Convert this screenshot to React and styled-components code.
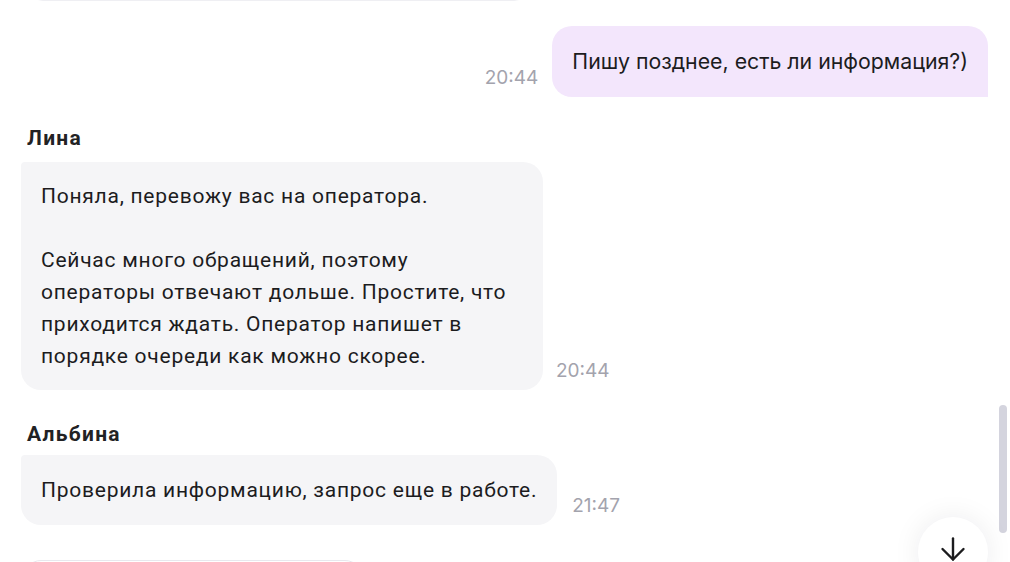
import React from 'react';
import styled, { createGlobalStyle } from 'styled-components';
import { ArrowDown } from 'lucide-react';

const GlobalStyle = createGlobalStyle`
  html, body {
    margin: 0;
    padding: 0;
    background: #fff;
  }
  body {
    font-family: Roboto, "Noto Sans", sans-serif;
    color: #1c1c1e;
  }
`;

const Viewport = styled.div`
  position: relative;
  width: 1010px;
  height: 562px;
  overflow: hidden;
  background: #fff;
`;

const Feed = styled.div`
  display: flex;
  flex-direction: column;
  padding: 0 22px 0 21px;
`;

const PrevCard = styled.div`
  height: 40px;
  margin: -39px 0 0 6px;
  width: 503px;
  box-sizing: border-box;
  border: 1px solid #efeff3;
  border-radius: 16px;
`;

const OutRow = styled.div`
  display: flex;
  justify-content: flex-end;
  align-items: flex-end;
  gap: 14px;
  margin-top: 25px;
`;

const InGroup = styled.div`
  display: flex;
  flex-direction: column;
  margin-top: ${({ $gap }) => $gap}px;
`;

const Name = styled.div`
  font-family: Roboto, sans-serif;
  font-weight: 700;
  font-size: 21px;
  letter-spacing: 1.3px;
  line-height: 24px;
  color: #222224;
  padding-left: 6px;
  margin-bottom: ${({ $gap = 12 }) => $gap}px;
`;

const InRow = styled.div`
  display: flex;
  align-items: flex-end;
  gap: ${({ $gap }) => $gap}px;
`;

const Bubble = styled.div`
  box-sizing: border-box;
  width: ${({ $width }) => ($width ? `${$width}px` : 'auto')};
  padding: ${({ $out, $padY = 18 }) => ($out ? '20px 20px' : `${$padY}px 20px`)};
  background: ${({ $out }) => ($out ? '#f3e6fc' : '#f5f5f7')};
  border-radius: ${({ $out }) => ($out ? '20px 20px 0 20px' : '4px 20px 20px 20px')};
  font-family: ${({ $out }) => ($out ? 'Inter, sans-serif' : 'Roboto, sans-serif')};
  font-size: ${({ $out }) => ($out ? '21.3px' : '21px')};
  letter-spacing: ${({ $out }) => ($out ? '0' : '0.75px')};
  line-height: ${({ $out }) => ($out ? '31px' : '32px')};
  color: #1c1c1e;
  white-space: pre-line;
`;

const Time = styled.span`
  font-family: Inter, sans-serif;
  font-size: 19px;
  line-height: 20px;
  color: #a3a3ad;
  padding-bottom: 9px;
  flex-shrink: 0;
`;

const NextCard = styled.div`
  margin: 35px 0 0 2px;
  width: 340px;
  height: 60px;
  box-sizing: border-box;
  border: 1px solid #e8e8ee;
  border-radius: 18px;
`;

const ScrollThumb = styled.div`
  position: absolute;
  right: 3px;
  top: 405px;
  width: 8px;
  height: 128px;
  border-radius: 4px;
  background: #d4d4de;
`;

const DownButton = styled.button`
  position: absolute;
  right: 22px;
  top: 517px;
  width: 70px;
  height: 70px;
  border-radius: 50%;
  border: none;
  padding: 0;
  background: #fff;
  box-shadow: 0 0 28px rgba(20, 20, 40, 0.08);
  display: flex;
  align-items: center;
  justify-content: center;
  color: #1c1c1e;
  cursor: pointer;
  & svg {
    margin-top: -6px;
  }
`;

const linaText = `Поняла, перевожу вас на оператора.

Сейчас много обращений, поэтому
операторы отвечают дольше. Простите, что
приходится ждать. Оператор напишет в
порядке очереди как можно скорее.`;

export default function App() {
  return (
    <Viewport>
      <GlobalStyle />
      <Feed>
        <PrevCard />
        <OutRow>
          <Time>20:44</Time>
          <Bubble $out>Пишу позднее, есть ли информация?)</Bubble>
        </OutRow>
        <InGroup $gap={29}>
          <Name>Лина</Name>
          <InRow $gap={13}>
            <Bubble $width={522}>{linaText}</Bubble>
            <Time>20:44</Time>
          </InRow>
        </InGroup>
        <InGroup $gap={32}>
          <Name $gap={9}>Альбина</Name>
          <InRow $gap={15}>
            <Bubble $padY={19}>Проверила информацию, запрос еще в работе.</Bubble>
            <Time>21:47</Time>
          </InRow>
        </InGroup>
        <NextCard />
      </Feed>
      <ScrollThumb />
      <DownButton aria-label="Вниз">
        <ArrowDown size={36} strokeWidth={1.6} />
      </DownButton>
    </Viewport>
  );
}
